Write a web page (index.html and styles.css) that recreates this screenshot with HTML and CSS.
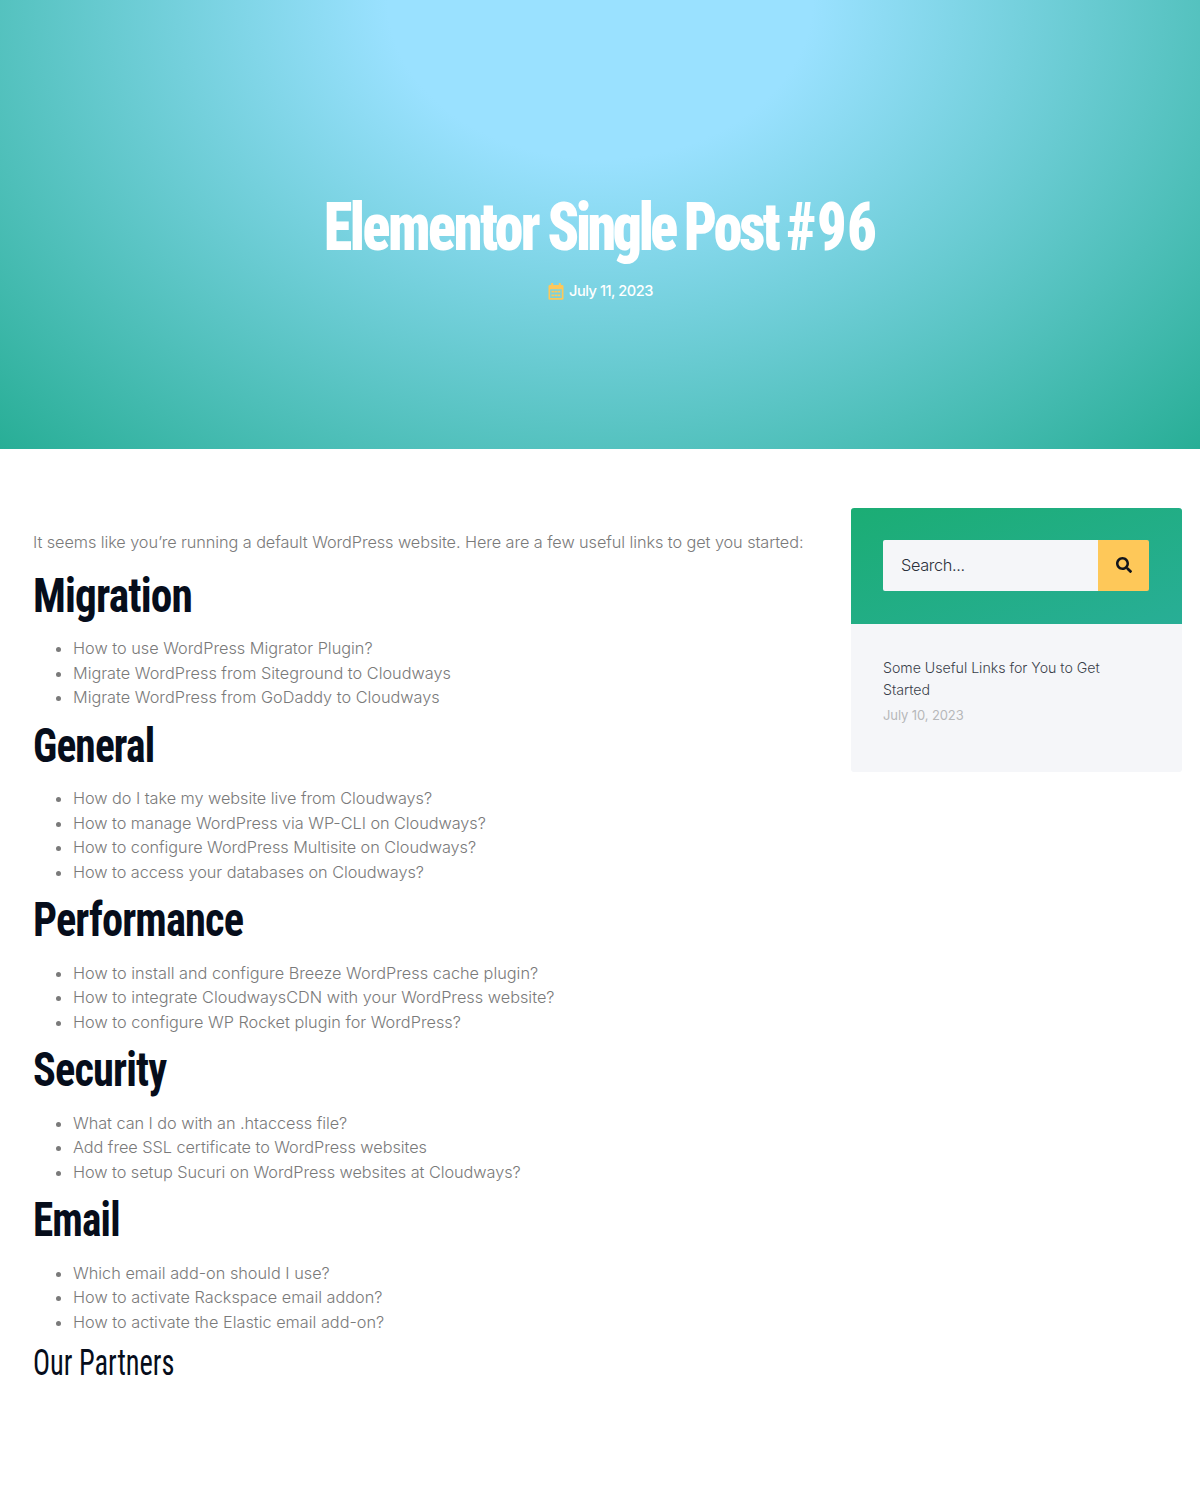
FILE: index.html
```html
<!DOCTYPE html>
<html lang="en">
<head>
<meta charset="utf-8">
<title>Elementor Single Post #96</title>
<link rel="stylesheet" href="styles.css">
</head>
<body>
<header class="hero">
  <h1 class="hero-title"><span>Elementor <span class="kern-single">Single</span> <span class="kern-post">Post</span> <span class="kern-number">#96</span></span></h1>
  <div class="hero-meta">
    <svg class="calendar" viewBox="0 0 16 17" aria-hidden="true">
      <path fill="currentColor" fill-rule="evenodd" d="M3.2 0h2v2h5.6V0h2v2h1.400q1.300 0 1.300 1.300v12.200q0 1.300-1.300 1.300H1.800q-1.300 0-1.300-1.300V3.300Q.5 2 1.800 2h1.400zM2.200 6.200v8.900h11.600V6.200z"/>
      <path stroke="currentColor" stroke-width="1.800" stroke-dasharray="2.700 .4" d="M3.400 8.700h9.200M3.400 12.300h9.200"/>
    </svg>
    <time>July 11, 2023</time>
  </div>
</header>
<div class="layout">
  <main class="post">
    <p class="intro">It seems like you’re running a default WordPress website. Here are a few useful links to get you started:</p>
    <h2 class="migration"><span>Migration</span></h2>
    <ul>
      <li>How to use WordPress Migrator Plugin?</li>
      <li>Migrate WordPress from Siteground to Cloudways</li>
      <li>Migrate WordPress from GoDaddy to Cloudways</li>
    </ul>
    <h2 class="general"><span>General</span></h2>
    <ul class="tight">
      <li>How do I take my website live from Cloudways?</li>
      <li>How to manage WordPress via WP-CLI on Cloudways?</li>
      <li>How to configure WordPress Multisite on Cloudways?</li>
      <li>How to access your databases on Cloudways?</li>
    </ul>
    <h2 class="performance"><span>Performance</span></h2>
    <ul>
      <li>How to install and configure Breeze WordPress cache plugin?</li>
      <li>How to integrate CloudwaysCDN with your WordPress website?</li>
      <li>How to configure WP Rocket plugin for WordPress?</li>
    </ul>
    <h2 class="security"><span>Security</span></h2>
    <ul class="tight">
      <li>What can I do with an .htaccess file?</li>
      <li>Add free SSL certificate to WordPress websites</li>
      <li>How to setup Sucuri on WordPress websites at Cloudways?</li>
    </ul>
    <h2 class="email"><span>Email</span></h2>
    <ul>
      <li>Which email add-on should I use?</li>
      <li>How to activate Rackspace email addon?</li>
      <li>How to activate the Elastic email add-on?</li>
    </ul>
    <h3><span>Our Partners</span></h3>
  </main>
  <aside class="sidebar">
    <div class="search-panel">
      <form class="search">
        <input type="search" placeholder="Search..." aria-label="Search">
        <button type="button" aria-label="Search">
          <svg viewBox="0 0 512 512" aria-hidden="true"><path fill="currentColor" d="M505 442.700L405.300 343c-4.500-4.500-10.600-7-17-7H372c27.600-35.300 44-79.700 44-128C416 93.100 322.900 0 208 0S0 93.100 0 208s93.100 208 208 208c48.300 0 92.700-16.400 128-44v16.300c0 6.400 2.500 12.500 7 17l99.700 99.700c9.400 9.400 24.600 9.400 33.900 0l28.300-28.300c9.400-9.400 9.400-24.600.1-34zM208 336c-70.700 0-128-57.200-128-128 0-70.700 57.200-128 128-128 70.700 0 128 57.200 128 128 0 70.700-57.200 128-128 128z"/></svg>
        </button>
      </form>
    </div>
    <div class="recent">
      <a class="recent-title">Some Useful Links for You to Get Started</a>
      <time class="recent-date">July 10, 2023</time>
    </div>
  </aside>
</div>
</body>
</html>
```
FILE: styles.css
```css
* {
  box-sizing: border-box;
}

body {
  margin: 0;
  background: #fff;
  color: #7a7a7a;
  font: 300 16.3px/24.4px Inter, "Liberation Sans", sans-serif;
}

h1, h2, h3, p, ul {
  margin: 0;
}

h1, h2, h3 {
  font-family: Roboto, sans-serif;
  font-stretch: 75%;
}

h1 > span, h2 > span, h3 > span {
  display: inline-block;
  transform-origin: left center;
  white-space: nowrap;
}

.hero {
  display: flex;
  flex-direction: column;
  align-items: center;
  height: 449px;
  padding-top: 188px;
  background: radial-gradient(at top center, #9ae1ff 25%, #28ae96 100%);
  color: #fff;
}

.hero-title {
  font-size: 66px;
  font-weight: 900;
  letter-spacing: -2.7px;
  line-height: 80px;
  word-spacing: -2px;
}

.hero-title > span {
  transform: translateX(1px) scaleX(.874);
  transform-origin: center;
}

.kern-single { letter-spacing: -3.9px; }
.kern-post { letter-spacing: -3.4px; }
.kern-number { letter-spacing: .8px; }

.hero-meta {
  display: flex;
  align-items: center;
  gap: 5px;
  margin-top: 11px;
  padding-left: 1px;
  font-size: 14.6px;
  font-weight: 500;
  letter-spacing: -.48px;
}

.calendar {
  width: 16px;
  height: 17px;
  color: #fec859;
}

.layout {
  display: grid;
  grid-template-columns: 818px 330.5px;
  padding: 59px 0 0 33px;
}

.post {
  padding-top: 21.9px;
}

.intro {
  margin-bottom: 5.4px;
  letter-spacing: -.08px;
}

h2 {
  padding: 8.9px 0 13.9px;
  color: #060d1b;
  font-size: 49px;
  font-weight: 700;
  letter-spacing: -1px;
  line-height: 54px;
}

.migration span { transform: scaleX(.885); }
.general span { transform: scaleX(.845); }
.performance span { transform: scaleX(.865); }
.security span { transform: scaleX(.865); }
.email span { transform: scaleX(.84); }

ul {
  padding-left: 40px;
}

.tight {
  letter-spacing: -.05px;
}

h3 {
  padding-top: 8.6px;
  color: #060d1b;
  font-size: 36px;
  font-weight: 400;
  line-height: 40px;
}

h3 span {
  transform: scaleX(.788);
}

.sidebar {
  align-self: start;
  overflow: hidden;
  border-radius: 3px;
  background: #f5f6f9;
}

.search-panel {
  height: 116px;
  padding: 32px 32.5px 32px 32px;
  background: linear-gradient(160deg, #1bad74 0%, #28ae96 100%);
}

.search {
  display: flex;
  height: 51px;
  overflow: hidden;
  border-radius: 2px;
}

.search input {
  flex: 1;
  min-width: 0;
  padding: 0 18px;
  border: 0;
  background: #f5f6f9;
  font: inherit;
  letter-spacing: -.35px;
}

.search input::placeholder {
  color: #2b303b;
}

.search button {
  display: grid;
  place-items: center;
  width: 51px;
  padding: 0 0 1px;
  border: 0;
  background: #fec859;
  color: #11151c;
}

.search svg {
  width: 16px;
  height: 16px;
}

.recent {
  display: flex;
  flex-direction: column;
  height: 148px;
  padding: 32.5px 32px 0;
}

.recent-title {
  color: #3a3f4a;
  font-size: 14.2px;
  letter-spacing: -.03px;
  line-height: 22.5px;
}

.recent-date {
  margin-top: 1.5px;
  color: #b7b8ba;
  font-size: 13px;
  font-weight: 400;
  letter-spacing: -.1px;
}
```
